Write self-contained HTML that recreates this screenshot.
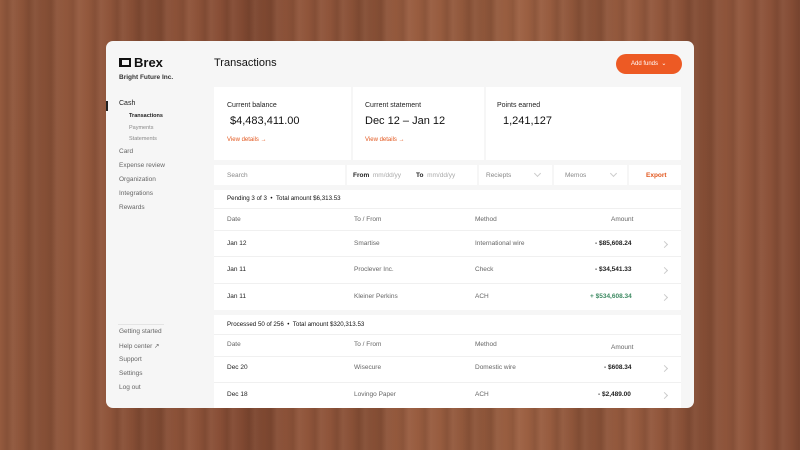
<!DOCTYPE html>
<html><head><style>
*{margin:0;padding:0;box-sizing:border-box}
body{width:800px;height:450px;overflow:hidden;font-family:"Liberation Sans",sans-serif;position:relative;
background:
repeating-linear-gradient(90deg,rgba(0,0,0,0) 0,rgba(0,0,0,.08) 7px,rgba(255,255,255,.04) 13px,rgba(0,0,0,0) 22px),
repeating-linear-gradient(90deg,rgba(60,25,10,.0) 0,rgba(60,25,10,.16) 40px,rgba(200,130,90,.08) 75px,rgba(60,25,10,0) 110px),
linear-gradient(90deg,#955a3e,#874d35 30%,#9b5f41 60%,#8a5038);}
.a{position:absolute}
.card{left:106px;top:41px;width:588px;height:367px;background:#f6f6f6;border-radius:7px;overflow:hidden}
.w{background:#fff;position:absolute}
.t{position:absolute;white-space:nowrap;color:#222}
.s{font-size:6.5px;color:#666}
.nav{font-size:6.5px;color:#666}
.or{color:#e2571e}
.b{font-weight:bold}
.chev{position:absolute;width:5px;height:5px;border-right:1px solid #ccc;border-top:1px solid #ccc;transform:rotate(45deg)}
.dd{position:absolute;width:5px;height:5px;border-right:1px solid #ccc;border-bottom:1px solid #ccc;transform:rotate(45deg)}
.line{position:absolute;height:1px;background:#f0f0f0}
</style></head><body>
<div class="a card">
  <div class="a" style="left:0;top:60px;width:2px;height:10px;background:#222"></div>
  <div class="a" style="left:13px;top:17px;width:12px;height:9px;border:2px solid #111;border-left-width:3px"></div>
  <div class="t b" style="left:28px;top:14px;font-size:13px;color:#111">Brex</div>
  <div class="t" style="left:13px;top:33px;font-size:6.5px;font-weight:bold;color:#333">Bright Future Inc.</div>
  <div class="t" style="left:13px;top:59px;font-size:7px;color:#222">Cash</div>
  <div class="t" style="left:23px;top:72px;font-size:5.5px;color:#222;font-weight:bold">Transactions</div>
  <div class="t" style="left:23px;top:84px;font-size:5.5px;color:#888">Payments</div>
  <div class="t" style="left:23px;top:95px;font-size:5.5px;color:#888">Statements</div>
  <div class="t nav" style="left:13px;top:107px">Card</div>
  <div class="t nav" style="left:13px;top:121px">Expense review</div>
  <div class="t nav" style="left:13px;top:135px">Organization</div>
  <div class="t nav" style="left:13px;top:149px">Integrations</div>
  <div class="t nav" style="left:13px;top:163px">Rewards</div>
  <div class="line" style="left:12px;top:283px;width:46px;background:#e4e4e4"></div>
  <div class="t nav" style="left:13px;top:287px">Getting started</div>
  <div class="t nav" style="left:13px;top:301px">Help center ↗</div>
  <div class="t nav" style="left:13px;top:315px">Support</div>
  <div class="t nav" style="left:13px;top:329px">Settings</div>
  <div class="t nav" style="left:13px;top:343px">Log out</div>

  <div class="t" style="left:108px;top:16px;font-size:11px;color:#111">Transactions</div>
  <div class="a" style="left:510px;top:13px;width:66px;height:20px;border-radius:10px;background:#ed5a24;color:#fff;font-size:6px;line-height:20px;padding-left:15px">Add funds &nbsp;⌄</div>

  <div class="w" style="left:108px;top:46px;width:137px;height:73px"></div>
  <div class="w" style="left:247px;top:46px;width:131px;height:73px"></div>
  <div class="w" style="left:380px;top:46px;width:195px;height:73px"></div>
  <div class="t" style="left:121px;top:61px;font-size:7px">Current balance</div>
  <div class="t" style="left:124px;top:74px;font-size:11px;color:#111">$4,483,411.00</div>
  <div class="t or" style="left:121px;top:96px;font-size:6px">View details →</div>
  <div class="t" style="left:259px;top:61px;font-size:7px">Current statement</div>
  <div class="t" style="left:259px;top:74px;font-size:11px;color:#111">Dec 12 – Jan 12</div>
  <div class="t or" style="left:259px;top:96px;font-size:6px">View details →</div>
  <div class="t" style="left:391px;top:61px;font-size:7px">Points earned</div>
  <div class="t" style="left:397px;top:74px;font-size:11px;color:#111">1,241,127</div>

  <div class="w" style="left:108px;top:124px;width:131px;height:20px"></div>
  <div class="w" style="left:241px;top:124px;width:130px;height:20px"></div>
  <div class="w" style="left:373px;top:124px;width:73px;height:20px"></div>
  <div class="w" style="left:448px;top:124px;width:73px;height:20px"></div>
  <div class="w" style="left:523px;top:124px;width:52px;height:20px"></div>
  <div class="t s" style="left:121px;top:131px;color:#888">Search</div>
  <div class="t s b" style="left:247px;top:131px;color:#222">From <span style="font-weight:normal;color:#aaa">&nbsp;mm/dd/yy</span></div>
  <div class="t s b" style="left:310px;top:131px;color:#222">To <span style="font-weight:normal;color:#aaa">&nbsp;mm/dd/yy</span></div>
  <div class="t s" style="left:380px;top:131px;color:#888">Reciepts</div>
  <div class="dd" style="left:429px;top:130px"></div>
  <div class="t s" style="left:459px;top:131px;color:#888">Memos</div>
  <div class="dd" style="left:505px;top:130px"></div>
  <div class="t s b or" style="left:540px;top:131px">Export</div>

  <div class="w" style="left:108px;top:149px;width:467px;height:120px"></div>
  <div class="t" style="left:121px;top:154px;font-size:6.2px;color:#111">Pending 3 of 3 &nbsp;• &nbsp;Total amount $6,313.53</div>
  <div class="line" style="left:108px;top:167px;width:467px"></div>
  <div class="t s" style="left:121px;top:175px">Date</div><div class="t s" style="left:248px;top:175px">To / From</div><div class="t s" style="left:369px;top:175px">Method</div><div class="t s" style="left:505px;top:175px">Amount</div>
  <div class="line" style="left:108px;top:189px;width:467px"></div>
  <div class="t s" style="left:121px;top:199px;color:#222">Jan 12</div><div class="t s" style="left:248px;top:199px">Smartise</div><div class="t s" style="left:369px;top:199px">International wire</div><div class="t s b" style="left:489px;top:199px;color:#222">- $85,608.24</div><div class="chev" style="left:556px;top:201px"></div>
  <div class="line" style="left:108px;top:215px;width:467px"></div>
  <div class="t s" style="left:121px;top:225px;color:#222">Jan 11</div><div class="t s" style="left:248px;top:225px">Proclever Inc.</div><div class="t s" style="left:369px;top:225px">Check</div><div class="t s b" style="left:489px;top:225px;color:#222">- $34,541.33</div><div class="chev" style="left:556px;top:227px"></div>
  <div class="line" style="left:108px;top:242px;width:467px"></div>
  <div class="t s" style="left:121px;top:252px;color:#222">Jan 11</div><div class="t s" style="left:248px;top:252px">Kleiner Perkins</div><div class="t s" style="left:369px;top:252px">ACH</div><div class="t s b" style="left:484px;top:252px;color:#3d8a62">+ $534,608.34</div><div class="chev" style="left:556px;top:254px"></div>

  <div class="w" style="left:108px;top:274px;width:467px;height:93px"></div>
  <div class="t" style="left:121px;top:280px;font-size:6.2px;color:#111">Processed 50 of 256 &nbsp;• &nbsp;Total amount $320,313.53</div>
  <div class="line" style="left:108px;top:293px;width:467px"></div>
  <div class="t s" style="left:121px;top:300px">Date</div><div class="t s" style="left:248px;top:300px">To / From</div><div class="t s" style="left:369px;top:300px">Method</div><div class="t s" style="left:505px;top:303px">Amount</div>
  <div class="line" style="left:108px;top:315px;width:467px"></div>
  <div class="t s" style="left:121px;top:323px;color:#222">Dec 20</div><div class="t s" style="left:248px;top:323px">Wisecure</div><div class="t s" style="left:369px;top:323px">Domestic wire</div><div class="t s b" style="left:498px;top:323px;color:#222">- $608.34</div><div class="chev" style="left:556px;top:325px"></div>
  <div class="line" style="left:108px;top:341px;width:467px"></div>
  <div class="t s" style="left:121px;top:350px;color:#222">Dec 18</div><div class="t s" style="left:248px;top:350px">Lovingo Paper</div><div class="t s" style="left:369px;top:350px">ACH</div><div class="t s b" style="left:492px;top:350px;color:#222">- $2,489.00</div><div class="chev" style="left:556px;top:352px"></div>
</div>
</body></html>
